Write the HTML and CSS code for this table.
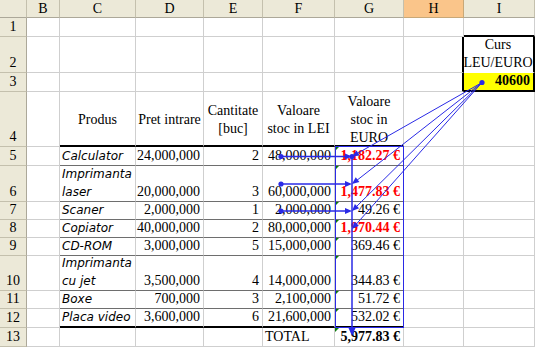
FILE: index.html
```html
<!DOCTYPE html>
<html>
<head>
<meta charset="utf-8">
<link rel="stylesheet" href="styles.css">
</head>
<body>
<div class="sheet">
  <!-- header row -->
  <div class="hd corner"></div>
  <div class="hd col">B</div>
  <div class="hd col">C</div>
  <div class="hd col">D</div>
  <div class="hd col">E</div>
  <div class="hd col">F</div>
  <div class="hd col">G</div>
  <div class="hd col sel">H</div>
  <div class="hd col">I</div>
  <!-- row 1 -->
  <div class="hd row">1</div>
  <div class="c"></div><div class="c"></div><div class="c"></div><div class="c"></div>
  <div class="c"></div><div class="c"></div><div class="c"></div><div class="c box-above"></div>
  <!-- row 2 -->
  <div class="hd row">2</div>
  <div class="c"></div><div class="c"></div><div class="c"></div><div class="c"></div>
  <div class="c"></div><div class="c"></div><div class="c box-left"></div>
  <div class="c ctr box-side box-mid">Curs<br>LEU/EURO</div>
  <!-- row 3 -->
  <div class="hd row">3</div>
  <div class="c"></div><div class="c"></div><div class="c"></div><div class="c"></div>
  <div class="c"></div><div class="c"></div><div class="c box-left"></div>
  <div class="c r b yellow box-side box-bottom">40600</div>
  <!-- row 4 -->
  <div class="hd row">4</div>
  <div class="c"></div>
  <div class="c ctr mid thick">Produs</div>
  <div class="c ctr mid thick">Pret intrare</div>
  <div class="c ctr mid thick">Cantitate<br>[buc]</div>
  <div class="c ctr mid thick">Valoare<br>stoc in LEI</div>
  <div class="c ctr mid thick">Valoare<br>stoc in<br>EURO</div>
  <div class="c"></div><div class="c"></div>
  <!-- row 5 -->
  <div class="hd row">5</div>
  <div class="c"></div>
  <div class="c it line">Calculator</div>
  <div class="c r line">24,000,000</div>
  <div class="c r line">2</div>
  <div class="c r line">48,000,000</div>
  <div class="c r line b red warn">1,182.27 €</div>
  <div class="c"></div><div class="c"></div>
  <!-- row 6 -->
  <div class="hd row">6</div>
  <div class="c"></div>
  <div class="c it line">Imprimanta<br>laser</div>
  <div class="c r line">20,000,000</div>
  <div class="c r line">3</div>
  <div class="c r line">60,000,000</div>
  <div class="c r line b red warn">1,477.83 €</div>
  <div class="c"></div><div class="c"></div>
  <!-- row 7 -->
  <div class="hd row">7</div>
  <div class="c"></div>
  <div class="c it line">Scaner</div>
  <div class="c r line">2,000,000</div>
  <div class="c r line">1</div>
  <div class="c r line">2,000,000</div>
  <div class="c r line warn">49.26 €</div>
  <div class="c"></div><div class="c"></div>
  <!-- row 8 -->
  <div class="hd row">8</div>
  <div class="c"></div>
  <div class="c it line">Copiator</div>
  <div class="c r line">40,000,000</div>
  <div class="c r line">2</div>
  <div class="c r line">80,000,000</div>
  <div class="c r line b red warn">1,970.44 €</div>
  <div class="c"></div><div class="c"></div>
  <!-- row 9 -->
  <div class="hd row">9</div>
  <div class="c"></div>
  <div class="c it line">CD-ROM</div>
  <div class="c r line">3,000,000</div>
  <div class="c r line">5</div>
  <div class="c r line">15,000,000</div>
  <div class="c r line warn">369.46 €</div>
  <div class="c"></div><div class="c"></div>
  <!-- row 10 -->
  <div class="hd row">10</div>
  <div class="c"></div>
  <div class="c it line">Imprimanta<br>cu jet</div>
  <div class="c r line">3,500,000</div>
  <div class="c r line">4</div>
  <div class="c r line">14,000,000</div>
  <div class="c r line warn">344.83 €</div>
  <div class="c"></div><div class="c"></div>
  <!-- row 11 -->
  <div class="hd row">11</div>
  <div class="c"></div>
  <div class="c it line">Boxe</div>
  <div class="c r line">700,000</div>
  <div class="c r line">3</div>
  <div class="c r line">2,100,000</div>
  <div class="c r line warn">51.72 €</div>
  <div class="c"></div><div class="c"></div>
  <!-- row 12 -->
  <div class="hd row">12</div>
  <div class="c"></div>
  <div class="c it thick">Placa video</div>
  <div class="c r thick">3,600,000</div>
  <div class="c r thick">6</div>
  <div class="c r thick">21,600,000</div>
  <div class="c r thick warn">532.02 €</div>
  <div class="c"></div><div class="c"></div>
  <!-- row 13 -->
  <div class="hd row">13</div>
  <div class="c"></div><div class="c"></div><div class="c"></div><div class="c"></div>
  <div class="c">TOTAL</div>
  <div class="c r b warn">5,977.83 €</div>
  <div class="c"></div><div class="c"></div>

  <svg class="arrows" width="535" height="347" viewBox="0 0 535 347">
    <g stroke="#2a2ae6" fill="none">
      <rect x="335.5" y="146.5" width="68" height="181" stroke-width="1"/>
      <line x1="482" y1="82.5" x2="356" y2="154.2" stroke-width="1"/>
      <line x1="482" y1="82.5" x2="356" y2="181" stroke-width="1"/>
      <line x1="482" y1="82.5" x2="355" y2="208" stroke-width="1"/>
      <line x1="482" y1="82.5" x2="355" y2="225.6" stroke-width="1"/>
      <line x1="281" y1="156.5" x2="346" y2="156.5" stroke-width="1.5"/>
      <line x1="281" y1="184" x2="346" y2="184" stroke-width="1.5"/>
      <line x1="281" y1="211" x2="346" y2="211" stroke-width="1.5"/>
      <line x1="352" y1="156.5" x2="352" y2="329" stroke-width="1.5"/>
    </g>
    <g fill="#2a2ae6">
      <circle cx="482" cy="82.5" r="2.6"/>
      <circle cx="281" cy="156.5" r="2.6"/>
      <circle cx="281" cy="184" r="2.6"/>
      <circle cx="281" cy="211" r="2.6"/>
      <circle cx="352" cy="156.5" r="2.6"/>
      <polygon points="352,156.5 359.6,155.6 356.6,150.4"/>
      <polygon points="352,184 359.4,182 355.7,177.3"/>
      <polygon points="352,211 359.1,208.2 354.9,204"/>
      <polygon points="352,229 358.9,225.8 354.4,221.8"/>
      <polygon points="352,156.5 345,153.5 345,159.5"/>
      <polygon points="352,184 345,181 345,187"/>
      <polygon points="352,211 345,208 345,214"/>
      <polygon points="352,336 348.5,328 355.5,328"/>
    </g>
  </svg>
</div>
</body>
</html>
```

FILE: styles.css
```css
html, body {
  margin: 0;
  padding: 0;
  background: #ffffff;
}

body {
  width: 535px;
  height: 347px;
  overflow: hidden;
  font-family: "Liberation Serif", "Times New Roman", serif;
  font-size: 14px;
  color: #000;
}

.sheet {
  position: relative;
  display: grid;
  grid-template-columns: 27px 33px 76px 68px 59px 72px 69px 60px 71px;
  grid-template-rows: 18px 19px 36px 19px 55px 19px 36px 18px 18px 18px 35px 18px 19px 19px;
}

.sheet > div {
  box-sizing: border-box;
  display: flex;
  align-items: flex-end;
  overflow: hidden;
  white-space: nowrap;
  line-height: 18px;
}

/* headers */
.hd {
  background: #ece9d8;
  border-right: 1px solid #c4c0ad;
  border-bottom: 1px solid #c4c0ad;
  justify-content: center;
  font-size: 14px;
}
.hd.col {
  align-items: center;
  border-bottom-color: #aca899;
}
.hd.corner {
  border-bottom-color: #aca899;
}
.hd.row {
  border-right-color: #aca899;
}
.hd.sel {
  background: #fac58a;
  border-right-color: #c8a878;
  border-bottom-color: #c8a878;
}

/* cells */
.c {
  background: #fff;
  border-right: 1px solid #cfcfcf;
  border-bottom: 1px solid #cfcfcf;
  padding: 0 3px 0 2px;
  justify-content: flex-start;
  text-align: left;
}
.r { justify-content: flex-end; text-align: right; }
.ctr { justify-content: center; text-align: center; padding: 0; }
.mid { align-items: center !important; padding-top: 3px; }
.b { font-weight: bold; }
.red { color: #ff0000; }
.it {
  font-family: "DejaVu Sans", Verdana, sans-serif;
  font-style: italic;
  font-size: 12px;
}

.line { border-bottom: 1px solid #6e6e6e; }
.thick { border-bottom: 2px solid #000; }

/* I2:I3 framed box */
.box-above { border-bottom: 2px solid #000; }
.box-left { border-right: 2px solid #000; }
.box-side { border-right: 2px solid #000; }
.box-mid { border-bottom-color: #fff; padding-right: 1px; }
.box-bottom { border-bottom: 2px solid #000; }
.yellow { background: #ffff00; }

/* green error indicator triangles */
.warn { position: relative; }
.warn::before {
  content: "";
  position: absolute;
  left: 0;
  top: 0;
  width: 0;
  height: 0;
  border-top: 4px solid #0a7a0a;
  border-right: 4px solid transparent;
}

.arrows {
  position: absolute;
  left: 0;
  top: 0;
  pointer-events: none;
}
```
